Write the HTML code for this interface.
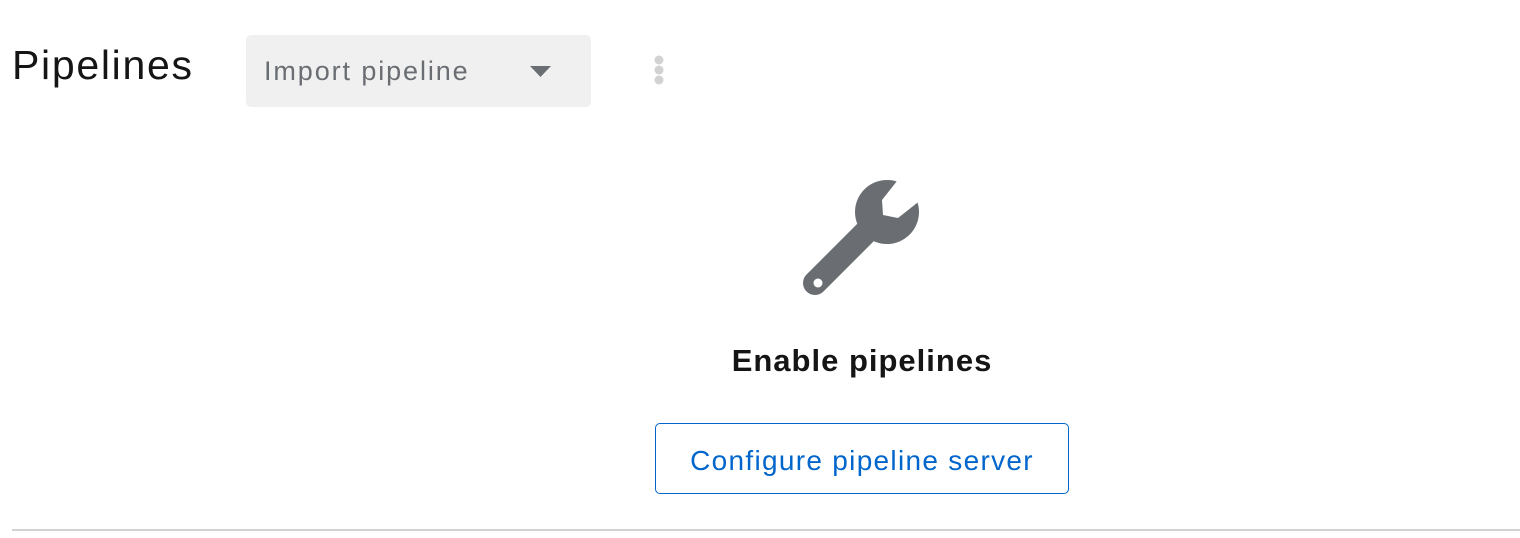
<!DOCTYPE html>
<html><head><style>
body{margin:0;width:1520px;height:538px;background:#fff;font-family:"Liberation Sans",sans-serif;position:relative;overflow:hidden}
.a{position:absolute}
</style></head><body>
<div class="a" style="left:12px;top:42px;font-size:41px;color:#151515;letter-spacing:1.7px">Pipelines</div>
<div class="a" style="left:246px;top:35px;width:345px;height:72px;background:#f0f0f0;border-radius:5px"></div>
<div class="a" style="left:264px;top:56px;font-size:27px;color:#6a6e73;letter-spacing:1.9px">Import pipeline</div>
<svg class="a" style="left:530px;top:66px" width="21" height="11"><polygon points="0,0 21,0 10.5,11" fill="#6a6e73"/></svg>
<svg class="a" style="left:652px;top:54px" width="14" height="32"><circle cx="7" cy="6" r="4.5" fill="#d2d2d2"/><circle cx="7" cy="16" r="4.5" fill="#d2d2d2"/><circle cx="7" cy="26" r="4.5" fill="#d2d2d2"/></svg>
<svg class="a" style="left:0;top:0" width="1520" height="538">
<circle cx="887" cy="212" r="32" fill="#6a6e73"/>
<line x1="815" y1="283" x2="872" y2="226" stroke="#6a6e73" stroke-width="24" stroke-linecap="round"/>
<polygon points="897,181 882,200 883,215 898,218 917,203 935,185 915,160" fill="#fff"/>
<circle cx="818" cy="283" r="4.5" fill="#fff"/>
</svg>
<div class="a" style="left:0;width:1724px;top:343px;text-align:center;font-size:31px;font-weight:bold;color:#151515;letter-spacing:1px">Enable pipelines</div>
<div class="a" style="left:655px;top:423px;width:412px;height:69px;border:1px solid #0066cc;border-radius:5px;box-sizing:content-box"></div>
<div class="a" style="left:655px;width:414px;top:445px;text-align:center;font-size:28px;color:#0066cc;letter-spacing:1.3px">Configure pipeline server</div>
<div class="a" style="left:12px;top:529px;width:1508px;height:2px;background:#d2d2d2"></div>
</body></html>
